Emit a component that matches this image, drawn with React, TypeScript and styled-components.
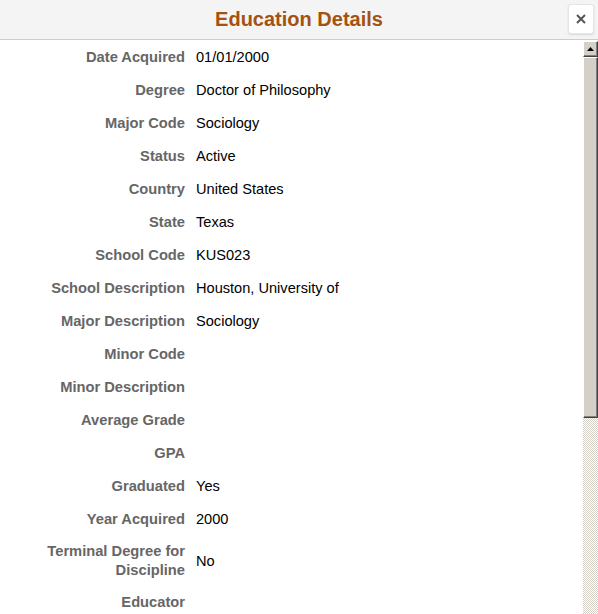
import styled, { createGlobalStyle } from 'styled-components';

const GlobalStyle = createGlobalStyle`
  html, body {
    margin: 0;
    padding: 0;
    background: #ffffff;
    overflow: hidden;
  }
`;

const S = {
  Modal: styled.div`
    width: 598px;
    height: 614px;
    display: flex;
    flex-direction: column;
    font-family: Arial, "Liberation Sans", sans-serif;
    background: #ffffff;
    overflow: hidden;
  `,
  Header: styled.div`
    position: relative;
    height: 39px;
    flex: 0 0 auto;
    display: flex;
    align-items: center;
    justify-content: center;
    background-color: #f4f4f4;
    border-bottom: 1px solid #cccccc;
  `,
  Title: styled.h1`
    margin: 0;
    font-size: 20px;
    font-weight: bold;
    color: #a4520f;
  `,
  Close: styled.button`
    position: absolute;
    top: 4px;
    right: 4px;
    width: 26px;
    height: 30px;
    padding: 0;
    display: flex;
    align-items: center;
    justify-content: center;
    background: #ffffff;
    border: 1px solid #e6e6e6;
    border-radius: 3px;
    box-shadow: 0 1px 2px rgba(0, 0, 0, 0.12);
    cursor: pointer;
  `,
  Body: styled.div`
    flex: 1;
    display: flex;
    min-height: 0;
  `,
  List: styled.div`
    flex: 1;
    padding-top: 2px;
    display: flex;
    flex-direction: column;
    overflow: hidden;
  `,
  Row: styled.div`
    box-sizing: border-box;
    flex-shrink: 0;
    display: grid;
    grid-template-columns: 185px 1fr;
    column-gap: 11px;
    align-items: center;
    min-height: 33px;
    padding: 5px 0 7px;
  `,
  Label: styled.div`
    text-align: right;
    font-size: 14.7px;
    line-height: 19px;
    font-weight: bold;
    color: #666666;
  `,
  Value: styled.div`
    font-size: 14.6px;
    line-height: 19px;
    color: #000000;
  `,
  Scrollbar: styled.div`
    width: 15px;
    flex: 0 0 auto;
    display: flex;
    flex-direction: column;
    background: repeating-conic-gradient(#d4d0c8 0 25%, #ffffff 0 50%) 0 0 / 2px 2px;
  `,
  ScrollPart: styled.div<{ $h: number }>`
    height: ${p => p.$h}px;
    box-sizing: border-box;
    display: flex;
    align-items: center;
    justify-content: center;
    background: #d4d0c8;
    border-top: 1px solid #ffffff;
    border-left: 1px solid #ffffff;
    border-right: 1px solid #404040;
    border-bottom: 1px solid #404040;
    box-shadow: inset -1px -1px 0 #808080;
  `,
  ScrollGap: styled.div`
    height: 1px;
    background: #ffffff;
  `,
};

const rows: [string, string][] = [
  ['Date Acquired', '01/01/2000'],
  ['Degree', 'Doctor of Philosophy'],
  ['Major Code', 'Sociology'],
  ['Status', 'Active'],
  ['Country', 'United States'],
  ['State', 'Texas'],
  ['School Code', 'KUS023'],
  ['School Description', 'Houston, University of'],
  ['Major Description', 'Sociology'],
  ['Minor Code', ''],
  ['Minor Description', ''],
  ['Average Grade', ''],
  ['GPA', ''],
  ['Graduated', 'Yes'],
  ['Year Acquired', '2000'],
  ['Terminal Degree for Discipline', 'No'],
  ['Educator', ''],
];

function App() {
  return (
    <>
      <GlobalStyle />
      <S.Modal>
        <S.Header>
          <S.Title>Education Details</S.Title>
          <S.Close aria-label="Close">
            <svg width="10" height="10" viewBox="0 0 10 10">
              <path d="M1 1 L9 9 M9 1 L1 9" stroke="#555555" strokeWidth="2" />
            </svg>
          </S.Close>
        </S.Header>
        <S.Body>
          <S.List>
            {rows.map(([label, value]) => (
              <S.Row key={label}>
                <S.Label>{label}</S.Label>
                <S.Value>{value}</S.Value>
              </S.Row>
            ))}
          </S.List>
          <S.Scrollbar>
            <S.ScrollGap />
            <S.ScrollPart $h={16}>
              <svg width="7" height="4" viewBox="0 0 7 4">
                <path d="M3.5 0 L7 4 L0 4 Z" fill="#000000" />
              </svg>
            </S.ScrollPart>
            <S.ScrollPart $h={361} />
          </S.Scrollbar>
        </S.Body>
      </S.Modal>
    </>
  );
}

export default App;
